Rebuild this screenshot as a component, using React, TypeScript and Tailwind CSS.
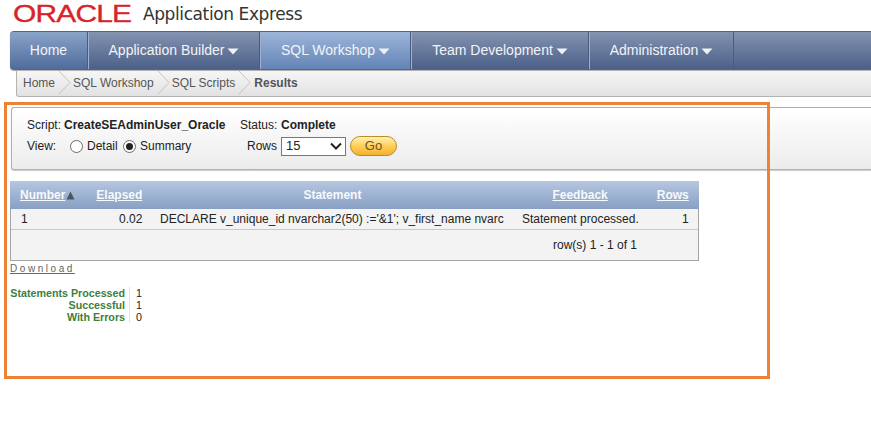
const font = { fontFamily: '"Liberation Sans", Arial, sans-serif' };

function Caret() {
  return (
    <svg width="12" height="7" viewBox="0 0 12 7" className="ml-[3px] mt-[1px]">
      <path d="M0.5 0.5H11.5L6 6.5Z" fill="#eef1f6" />
    </svg>
  );
}

function Tab({ label, caret, active, first, w }: { label: string; caret?: boolean; active?: boolean; first?: boolean; w: string }) {
  return (
    <div
      className={`flex h-full items-center justify-center text-[14px] text-[#f2f4f8] border-r border-r-[#4a5d80] border-l border-l-[#9fb0cc] ${w} ${
        first ? "rounded-l-[4px] bg-gradient-to-b from-[#8aa3c8] to-[#4f6c9b] border-l-0" : active ? "bg-gradient-to-b from-[#9db5d9] to-[#6484b6]" : "bg-gradient-to-b from-[#8393b0] to-[#4c6088]"
      }`}
    >
      {label}
      {caret && <Caret />}
    </div>
  );
}

function Chevron() {
  return (
    <svg width="14" height="25" viewBox="0 0 14 25" className="mx-[3px] shrink-0">
      <path d="M1 1L12 12.5L1 24" fill="none" stroke="#c4c4c4" strokeWidth="1" />
    </svg>
  );
}

function Radio({ on }: { on?: boolean }) {
  return (
    <span className="inline-flex h-[13px] w-[13px] items-center justify-center rounded-full border border-[#6b6b6b] bg-white">
      {on && <span className="h-[7px] w-[7px] rounded-full bg-[#222]" />}
    </span>
  );
}

export default function App() {
  return (
    <div className="relative h-[431px] w-[871px] overflow-hidden bg-white" style={font}>
      <header className="flex h-[31px] items-start pl-[13px]">
        <span className="mt-[1px] w-[118px] origin-left scale-x-[1.3] text-[23px] leading-[26px] tracking-[-0.6px] text-[#d8232a] [-webkit-text-stroke:0.35px_#d8232a]">
          ORACLE
        </span>
        <span className="ml-[12px] mt-[3px] text-[17px] leading-[22px] text-[#333] [font-family:'DejaVu_Sans'] tracking-[-0.4px]">
          Application Express
        </span>
      </header>

      <nav className="ml-[10px] flex h-[39px] border-y border-y-[#56667f] bg-gradient-to-b from-[#8393b0] to-[#4c6088] shadow-[0_1px_1px_#aaa] rounded-l-[4px]">
        <Tab first label="Home" w="w-[78px]" />
        <Tab label="Application Builder" caret w="w-[172px]" />
        <Tab active label="SQL Workshop" caret w="w-[151px]" />
        <Tab label="Team Development" caret w="w-[178px]" />
        <Tab label="Administration" caret w="w-[145px]" />
      </nav>

      <div className="ml-[16px] mt-px flex h-[26px] items-center rounded-bl-[3px] border-b border-l border-[#b3b3b3] bg-gradient-to-b from-[#f6f6f6] to-[#e2e2e2] pb-[2px] pl-[6px] text-[12px] text-[#555]">
        <span>Home</span>
        <Chevron />
        <span className="-ml-[2px]">SQL Workshop</span>
        <Chevron />
        <span className="-ml-[2px]">SQL Scripts</span>
        <Chevron />
        <span className="-ml-[1px] font-bold">Results</span>
      </div>

      <section className="ml-[11px] mt-[10px] h-[63px] rounded-l-[3px] border-y border-l border-[#b0b0b0] bg-gradient-to-b from-white to-[#ececec] pl-[15px] pt-[10px] text-[12px] leading-[14px] text-[#222] shadow-[0_1px_1px_#ccc]">
        <div className="flex h-[14px] items-center">
          <span className="w-[37px]">Script:</span>
          <span className="w-[176px] font-bold">CreateSEAdminUser_Oracle</span>
          <span className="w-[41px]">Status:</span>
          <span className="font-bold">Complete</span>
        </div>
        <div className="mt-[4px] flex h-[20px] items-center">
          <span className="w-[43px]">View:</span>
          <Radio />
          <span className="ml-[4px] w-[36px]">Detail</span>
          <Radio on />
          <span className="ml-[4px] w-[66px]">Summary</span>
          <span className="ml-[38px] w-[33px] text-right">Rows</span>
          <span className="ml-[4px] flex h-[19px] w-[65px] items-center justify-between border border-[#777] bg-white pl-[4px] pr-[3px] text-[13px]">
            15
            <svg width="12" height="8" viewBox="0 0 12 8">
              <path d="M1 1.5L6 6.5L11 1.5" fill="none" stroke="#222" strokeWidth="2" />
            </svg>
          </span>
          <span className="ml-[4px] flex h-[20px] w-[47px] items-center justify-center rounded-full border border-[#b98e2a] bg-gradient-to-b from-[#fff0b5] via-[#ffcf55] to-[#f3b02e] text-[13px] text-[#6a5520]">
            Go
          </span>
        </div>
      </section>

      <div className="ml-[10px] mt-[11px] w-[689px] border border-t-0 border-[#a5a5a5]">
        <div className="-mx-px flex h-[28px] items-center bg-gradient-to-b from-[#b5c6e0] to-[#88a0c4] text-[12px] font-bold text-[#f7f9fc]">
          <span className="ml-[10px] underline">Number</span>
          <svg width="9" height="9" viewBox="0 0 9 9" className="ml-[1px]">
            <path d="M4.5 0.5L8.5 8.5H0.5Z" fill="#4d5563" />
          </svg>
          <span className="ml-[21px] underline">Elapsed</span>
          <span className="ml-[161px]">Statement</span>
          <span className="ml-[191px] underline">Feedback</span>
          <span className="ml-[49px] underline">Rows</span>
        </div>
        <div className="flex h-[21px] items-center border-b border-[#c9c9c9] bg-[#f3f3f3] text-[12px] text-[#222]">
          <span className="ml-[10px] w-[20px]">1</span>
          <span className="ml-[78px] w-[32px]">0.02</span>
          <span className="ml-[9px] w-[344px] whitespace-nowrap">DECLARE v_unique_id nvarchar2(50) :='&amp;1'; v_first_name nvarc</span>
          <span className="ml-[18px] w-[116px] whitespace-nowrap">Statement processed.</span>
          <span className="ml-[44px] w-[10px]">1</span>
        </div>
        <div className="flex h-[30px] items-center justify-end bg-[#f3f3f3] pr-[61px] text-[12px] text-[#222]">row(s) 1 - 1 of 1</div>
      </div>

      <div className="ml-[10px] mt-px text-[10px] leading-[14px] tracking-[2.55px] text-[#666] underline">Download</div>

      <div className="ml-[10px] mt-[11px] grid w-[140px] grid-cols-[115px_1fr] text-[10.7px] font-bold leading-[12px]">
        <span className="whitespace-nowrap text-right text-[#3d7f3d]">Statements Processed</span>
        <span className="ml-[4px] border-l border-[#e4e4e4] pl-[6px] font-normal text-[#222]">1</span>
        <span className="text-right text-[#3d7f3d]">Successful</span>
        <span className="ml-[4px] border-l border-[#e4e4e4] pl-[6px] font-normal text-[#222]">1</span>
        <span className="text-right text-[#3d7f3d]">With Errors</span>
        <span className="ml-[4px] border-l border-[#e4e4e4] pl-[6px] font-normal text-[#222]">0</span>
      </div>

      <div className="pointer-events-none absolute left-[4px] top-[102px] h-[277px] w-[766px] border-[3px] border-[#ed8237]" />
    </div>
  );
}
